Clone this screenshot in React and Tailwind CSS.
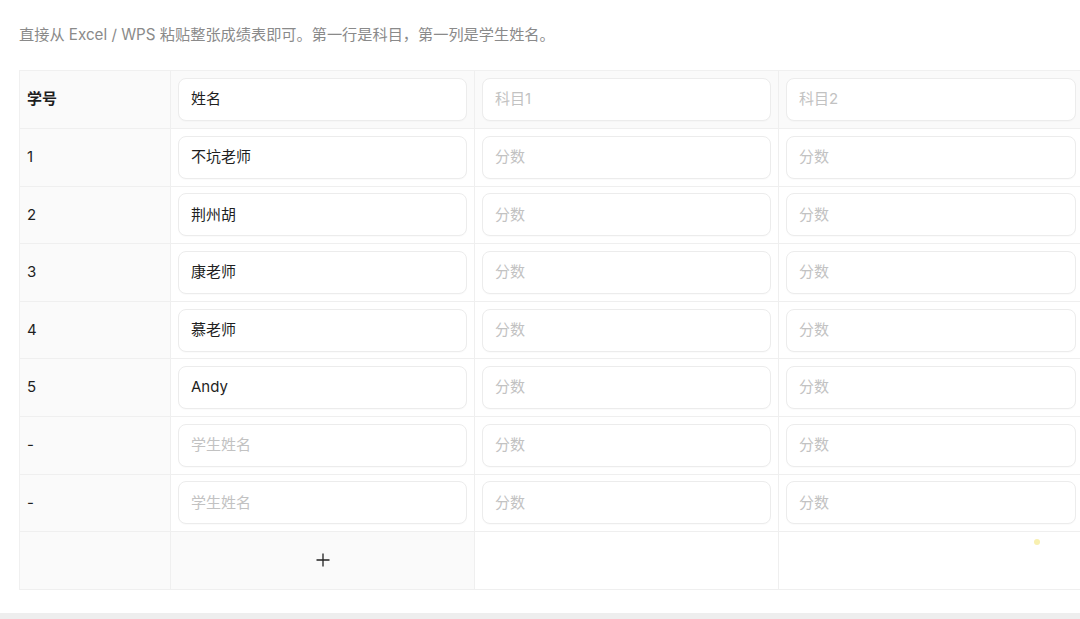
import React from "react";

const rows = [
  { id: "1", name: "不坑老师" },
  { id: "2", name: "荆州胡" },
  { id: "3", name: "康老师" },
  { id: "4", name: "慕老师" },
  { id: "5", name: "Andy" },
  { id: "-", name: "" },
  { id: "-", name: "" },
];

function Field({ value, placeholder }) {
  return (
    <div className="h-[43px] w-full rounded-[8px] border border-[#ececec] bg-white flex items-center pl-[12px] shadow-[0_1px_1px_rgba(0,0,0,0.02)]">
      {value ? (
        <span className="text-[15px] text-[#1f1f1f]">{value}</span>
      ) : (
        <span className="text-[15px] text-[#c2c2c2]">{placeholder}</span>
      )}
    </div>
  );
}

export default function App() {
  return (
    <div
      className="relative w-[1080px] h-[619px] overflow-hidden bg-white"
      style={{ fontFamily: 'Inter, "Noto Sans CJK SC", sans-serif' }}
    >
      <div className="pl-[19px] pt-[24px] text-[15.2px] leading-[22px] text-[#8a8a8a]">
        直接从 Excel / WPS 粘贴整张成绩表即可。第一行是科目，第一列是学生姓名。
      </div>
      <div className="ml-[19px] mt-[24px] w-[1063px] border-t border-[#f0f0f0] border-l">
        <div className="grid grid-cols-[151px_304px_304px_304px] h-[58px] border-b border-[#efefef] bg-[#fafafa]">
          <div className="flex items-center pl-[7px] text-[15px] font-semibold text-[#1f1f1f] border-r border-[#efefef]">
            学号
          </div>
          <div className="flex items-center pl-[7px] pr-[7px] border-r border-[#efefef]">
            <Field value="姓名" />
          </div>
          <div className="flex items-center pl-[7px] pr-[7px] border-r border-[#efefef]">
            <Field placeholder="科目1" />
          </div>
          <div className="flex items-center pl-[7px] pr-[7px]">
            <Field placeholder="科目2" />
          </div>
        </div>
        {rows.map((r, i) => (
          <div
            key={i}
            className="grid grid-cols-[151px_304px_304px_304px] h-[57.6px] border-b border-[#efefef]"
          >
            <div className="flex items-center pl-[7px] text-[15px] text-[#1f1f1f] bg-[#fafafa] border-r border-[#efefef]">
              {r.id}
            </div>
            <div className="flex items-center pl-[7px] pr-[7px] border-r border-[#efefef]">
              <Field value={r.name} placeholder="学生姓名" />
            </div>
            <div className="flex items-center pl-[7px] pr-[7px] border-r border-[#efefef]">
              <Field placeholder="分数" />
            </div>
            <div className="flex items-center pl-[7px] pr-[7px]">
              <Field placeholder="分数" />
            </div>
          </div>
        ))}
        <div className="grid grid-cols-[151px_304px_304px_304px] h-[57.6px] border-b border-[#efefef]">
          <div className="bg-[#fafafa] border-r border-[#efefef]" />
          <div className="bg-[#fafafa] border-r border-[#efefef] flex items-center justify-center">
            <svg width="14" height="14" viewBox="0 0 14 14">
              <path d="M7 0.5V13.5M0.5 7H13.5" stroke="#222" strokeWidth="1.3" />
            </svg>
          </div>
          <div className="border-r border-[#efefef]" />
          <div />
        </div>
      </div>
      <div className="absolute left-0 right-0 bottom-0 h-[6px] bg-[#eeeeee]" />
      <div className="absolute left-[1034px] top-[539px] w-[6px] h-[6px] rounded-full bg-[#f8f0b0]" />
    </div>
  );
}
